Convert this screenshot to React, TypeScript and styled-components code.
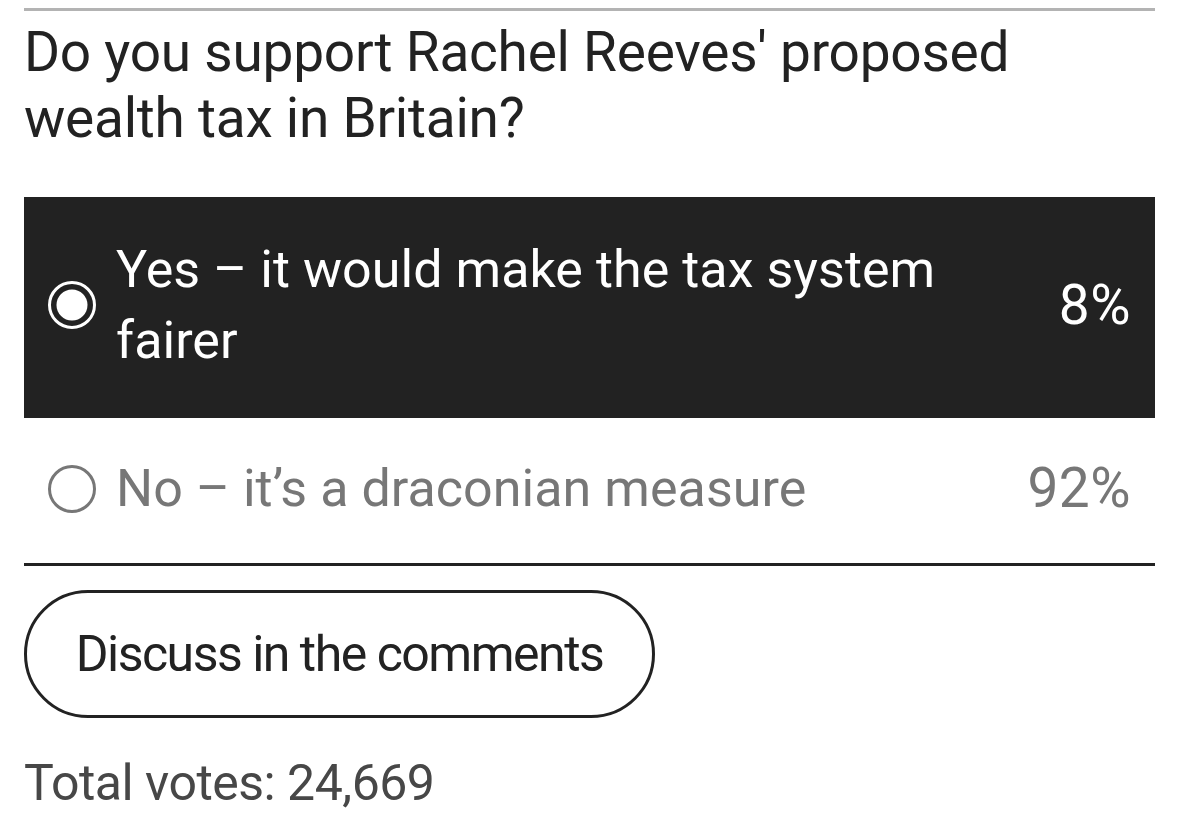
import styled, { createGlobalStyle } from "styled-components";

const GlobalStyle = createGlobalStyle`
  html, body {
    margin: 0;
    padding: 0;
    background: #fff;
  }
  body {
    font-family: Roboto, "Liberation Sans", sans-serif;
    color: #222;
  }
`;

const Poll = styled.section`
  padding: 8px 24px 0 24px;
  width: 1131px;
`;

const TopRule = styled.div`
  height: 3px;
  background: #b3b3b3;
`;

const Question = styled.h2`
  margin: 8px 0 0 0;
  font-size: 55px;
  font-weight: 400;
  line-height: 66px;
  letter-spacing: -0.25px;
  color: #222;
  max-width: 1020px;
`;

const Options = styled.div`
  margin-top: 46px;
  display: flex;
  flex-direction: column;
`;

const Option = styled.div<{ $selected?: boolean }>`
  display: flex;
  align-items: center;
  gap: 19px;
  padding: ${(p) => (p.$selected ? "37px 24px 42px 23px" : "35px 24px 39px 23px")};
  background: ${(p) => (p.$selected ? "#222" : "transparent")};
  color: ${(p) => (p.$selected ? "#fff" : "#777")};
`;

const Label = styled.span`
  flex: 1;
  font-size: 52px;
  line-height: 71px;
  letter-spacing: 0.05px;
  max-width: 860px;
`;

const Percent = styled.span`
  margin-left: auto;
  font-size: 55px;
  line-height: 71px;
  letter-spacing: 0.5px;
`;

const Divider = styled.div`
  height: 3px;
  background: #222;
`;

const DiscussButton = styled.button`
  margin-top: 24px;
  width: 631px;
  height: 128px;
  border: 3px solid #222;
  border-radius: 64px;
  background: #fff;
  font-family: inherit;
  font-size: 50px;
  letter-spacing: -1.5px;
  color: #222;
  cursor: pointer;
`;

const Total = styled.p`
  margin: 36px 0 0 0;
  font-size: 50px;
  letter-spacing: -0.5px;
  color: #474747;
`;

const Radio = ({ selected }: { selected?: boolean }) => (
  <svg width="50" height="50" viewBox="0 0 50 50">
    <circle
      cx="25"
      cy="25"
      r="22.5"
      fill="none"
      stroke={selected ? "#fff" : "#777"}
      strokeWidth="3"
    />
    {selected && <circle cx="25" cy="25" r="15.5" fill="#fff" />}
  </svg>
);

export default function App() {
  return (
    <>
      <GlobalStyle />
      <Poll>
        <TopRule />
        <Question>Do you support Rachel Reeves' proposed wealth tax in Britain?</Question>
        <Options>
          <Option $selected>
            <Radio selected />
            <Label>Yes – it would make the tax system fairer</Label>
            <Percent>8%</Percent>
          </Option>
          <Option>
            <Radio />
            <Label>No – it’s a draconian measure</Label>
            <Percent>92%</Percent>
          </Option>
        </Options>
        <Divider />
        <DiscussButton>Discuss in the comments</DiscussButton>
        <Total>Total votes: 24,669</Total>
      </Poll>
    </>
  );
}
